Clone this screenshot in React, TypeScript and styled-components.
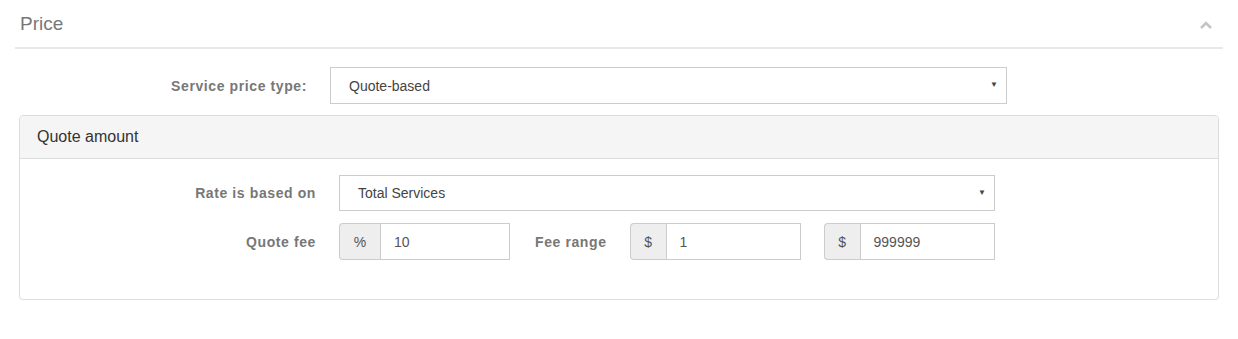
import styled, { createGlobalStyle } from 'styled-components';

const GlobalStyle = createGlobalStyle`
  body {
    margin: 0;
    background: #fff;
    font-family: 'Liberation Sans', Arial, sans-serif;
  }
`;

const Page = styled.div`
  padding: 0 15px;
`;

const SectionHeader = styled.div`
  display: flex;
  align-items: center;
  justify-content: space-between;
  height: 47px;
  padding: 0 10px 0 5px;
  border-bottom: 2px solid #e8e8e8;
`;

const SectionTitle = styled.div`
  font-size: 19px;
  color: #777;
  margin-top: 1px;
`;

const Chevron = styled.svg`
  width: 14px;
  height: 10px;
  margin-top: 3px;
`;

const FormRow = styled.div<{ labelWidth: number; gap: number }>`
  display: flex;
  align-items: center;
  gap: ${({ gap }) => gap}px;
  & > label {
    width: ${({ labelWidth }) => labelWidth}px;
  }
`;

const TopRow = styled(FormRow)`
  margin-top: 18px;
`;

const Label = styled.label`
  flex: none;
  text-align: right;
  font-size: 14px;
  font-weight: bold;
  letter-spacing: 0.6px;
  color: #777;
`;

const InlineLabel = styled.span`
  font-size: 14px;
  font-weight: bold;
  letter-spacing: 0.6px;
  color: #777;
  margin: 0 0 0 2px;
`;

const Select = styled.div<{ width: number; height?: number }>`
  position: relative;
  box-sizing: border-box;
  width: ${({ width }) => width}px;
  height: ${({ height = 36 }) => height}px;
  border: 1px solid #ccc;
  padding: 0 18px;
  display: flex;
  align-items: center;
  font-size: 14px;
  color: #444;
  &::after {
    content: '▼';
    position: absolute;
    right: 8px;
    top: 12px;
    font-size: 8px;
    color: #444;
  }
`;

const Panel = styled.div`
  margin: 11px 0 0 4px;
  width: 1200px;
  box-sizing: border-box;
  border: 1px solid #ddd;
  border-radius: 4px;
  box-shadow: 0 1px 1px rgba(0, 0, 0, 0.05);
`;

const PanelHeading = styled.div`
  height: 42px;
  background: #f5f5f5;
  border-bottom: 1px solid #ddd;
  border-radius: 3px 3px 0 0;
  display: flex;
  align-items: center;
  padding-left: 17px;
  font-size: 16px;
  color: #333;
`;

const PanelBody = styled.div`
  padding: 16px 0 39px;
  display: flex;
  flex-direction: column;
  gap: 12px;
`;

const InputGroup = styled.div<{ inputWidth: number; addonWidth: number }>`
  display: flex;
  height: 37px;
  font-size: 14px;
  color: #555;
  & > span {
    box-sizing: border-box;
    width: ${({ addonWidth }) => addonWidth}px;
  }
  & > div {
    box-sizing: border-box;
    width: ${({ inputWidth }) => inputWidth}px;
  }
`;

const Addon = styled.span`
  display: flex;
  align-items: center;
  justify-content: center;
  background: #eee;
  border: 1px solid #ccc;
  border-right: none;
  border-radius: 4px 0 0 4px;
  color: #555;
`;

const Input = styled.div`
  display: flex;
  align-items: center;
  border: 1px solid #ccc;
  padding-left: 13px;
`;

export default function App() {
  return (
    <Page>
      <GlobalStyle />
      <SectionHeader>
        <SectionTitle>Price</SectionTitle>
        <Chevron viewBox="0 0 14 10">
          <path d="M2 8 L7 3 L12 8" fill="none" stroke="#c4c4c4" strokeWidth="2.6" />
        </Chevron>
      </SectionHeader>
      <TopRow labelWidth={292} gap={23}>
        <Label>Service price type:</Label>
        <Select width={677} height={37}>Quote-based</Select>
      </TopRow>
      <Panel>
        <PanelHeading>Quote amount</PanelHeading>
        <PanelBody>
          <FormRow labelWidth={296} gap={23}>
            <Label>Rate is based on</Label>
            <Select width={656}>Total Services</Select>
          </FormRow>
          <FormRow labelWidth={296} gap={23}>
            <Label>Quote fee</Label>
            <InputGroup addonWidth={41} inputWidth={130}>
              <Addon>%</Addon>
              <Input>10</Input>
            </InputGroup>
            <InlineLabel>Fee range</InlineLabel>
            <InputGroup addonWidth={36} inputWidth={135}>
              <Addon>$</Addon>
              <Input>1</Input>
            </InputGroup>
            <InputGroup addonWidth={36} inputWidth={135}>
              <Addon>$</Addon>
              <Input>999999</Input>
            </InputGroup>
          </FormRow>
        </PanelBody>
      </Panel>
    </Page>
  );
}
